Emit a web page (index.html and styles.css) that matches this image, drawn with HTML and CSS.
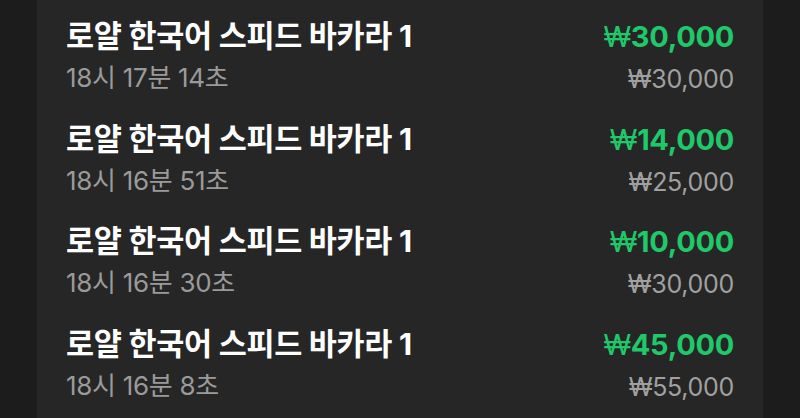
FILE: index.html
```html
<!DOCTYPE html>
<html lang="ko">
<head>
<meta charset="utf-8">
<link rel="stylesheet" href="styles.css">
</head>
<body>
<div class="panel">
  <div class="row">
    <div class="left">
      <div class="title">로얄 한국어 스피드 바카라 1</div>
      <div class="time">18시 17분 14초</div>
    </div>
    <div class="right">
      <div class="win"><span class="won">₩</span>30,000</div>
      <div class="bet">₩30,000</div>
    </div>
  </div>
  <div class="row">
    <div class="left">
      <div class="title">로얄 한국어 스피드 바카라 1</div>
      <div class="time">18시 16분 51초</div>
    </div>
    <div class="right">
      <div class="win"><span class="won">₩</span>14,000</div>
      <div class="bet">₩25,000</div>
    </div>
  </div>
  <div class="row">
    <div class="left">
      <div class="title">로얄 한국어 스피드 바카라 1</div>
      <div class="time">18시 16분 30초</div>
    </div>
    <div class="right">
      <div class="win"><span class="won">₩</span>10,000</div>
      <div class="bet">₩30,000</div>
    </div>
  </div>
  <div class="row">
    <div class="left">
      <div class="title">로얄 한국어 스피드 바카라 1</div>
      <div class="time">18시 16분 8초</div>
    </div>
    <div class="right">
      <div class="win"><span class="won">₩</span>45,000</div>
      <div class="bet">₩55,000</div>
    </div>
  </div>
</div>
</body>
</html>
```
FILE: styles.css
```css
html, body {
  margin: 0;
  padding: 0;
  background: #1c1c1c;
  height: 418px;
  overflow: hidden;
}
.panel {
  margin: 0 37px;
  height: 418px;
  background: #262626;
  padding: 0 29px 0 29px;
  box-sizing: border-box;
  font-family: "Inter", "Noto Sans CJK KR", "Noto Sans", sans-serif;
}
.row {
  display: flex;
  justify-content: space-between;
  align-items: flex-start;
  height: 102.5px;
  padding-top: 18px;
  box-sizing: border-box;
}
.left, .right {
  display: flex;
  flex-direction: column;
}
.right {
  align-items: flex-end;
}
.title {
  color: #ffffff;
  font-size: 30.5px;
  font-weight: 700;
  line-height: 36px;
  letter-spacing: -0.3px;
}
.time {
  color: #9a9a9a;
  font-size: 26px;
  line-height: 32px;
  margin-top: 8px;
  letter-spacing: -0.3px;
}
.win {
  color: #20c86a;
  font-size: 29px;
  font-weight: 700;
  line-height: 36px;
  margin-top: 1px;
  letter-spacing: -0.3px;
}
.won {
  font-weight: 400;
}
.bet {
  color: #a0a0a0;
  font-size: 25px;
  line-height: 32px;
  margin-top: 8px;
  letter-spacing: -0.3px;
}
```
